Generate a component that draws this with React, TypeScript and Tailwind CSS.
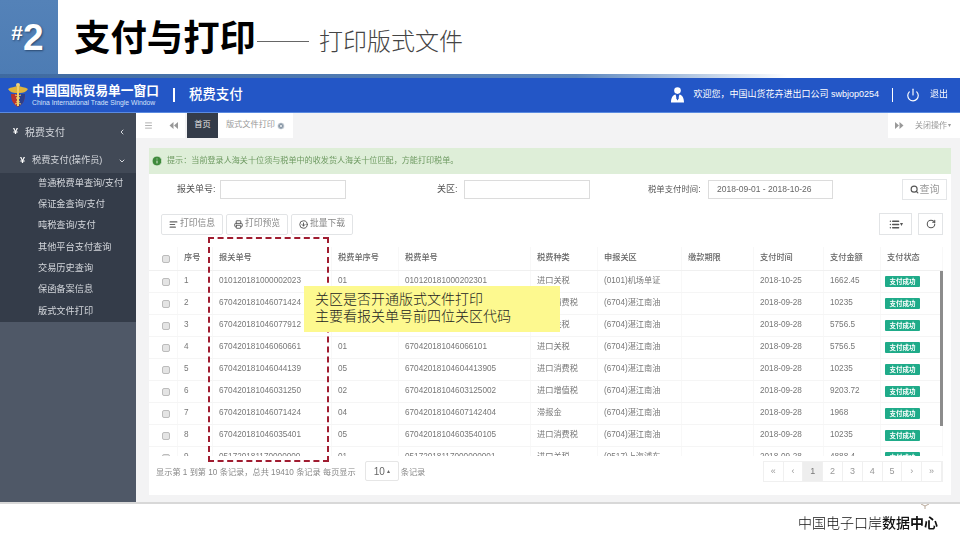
import React from "react";
import { Menu, ChevronLeft, ChevronDown, Info, Search, RotateCw, Printer, CircleArrowDown, AlignLeft, List, Power, CircleX } from "lucide-react";

const cols = "grid grid-cols-[29px_35px_119px_67px_132px_67px_84px_72px_70px_57px_62px]";
const cell = "h-full flex items-center border-r border-[#f8f8f8]";
const rows = [
  ["1", "010120181000002023", "01", "010120181000202301", "进口关税", "(0101)机场单证", "", "2018-10-25", "1662.45"],
  ["2", "670420181046071424", "", "", "进口消费税", "(6704)湛江南油", "", "2018-09-28", "10235"],
  ["3", "670420181046077912", "", "", "进口关税", "(6704)湛江南油", "", "2018-09-28", "5756.5"],
  ["4", "670420181046060661", "01", "670420181046066101", "进口关税", "(6704)湛江南油", "", "2018-09-28", "5756.5"],
  ["5", "670420181046044139", "05", "670420181046044 13905", "进口消费税", "(6704)湛江南油", "", "2018-09-28", "10235"],
  ["6", "670420181046031250", "02", "670420181046031 25002", "进口增值税", "(6704)湛江南油", "", "2018-09-28", "9203.72"],
  ["7", "670420181046071424", "04", "670420181046071 42404", "滞报金", "(6704)湛江南油", "", "2018-09-28", "1968"],
  ["8", "670420181046035401", "05", "670420181046035 40105", "进口消费税", "(6704)湛江南油", "", "2018-09-28", "10235"],
  ["9", "051720181170000000", "01", "051720181170000 00001", "进口关税", "(0517)上海浦东", "", "2018-09-28", "4888.4"],
].map((r) => r.map((c) => c.replace(/(\d{15}) (\d+)/, "$1$2")));

const heads = ["", "序号", "报关单号", "税费单序号", "税费单号", "税费种类", "申报关区", "缴款期限", "支付时间", "支付金额", "支付状态"];
const sub = ["普通税费单查询/支付", "保证金查询/支付", "吨税查询/支付", "其他平台支付查询", "交易历史查询", "保函备案信息", "版式文件打印"];

function Check() {
  return <span className="block w-[8px] h-[8px] rounded-[2px] border border-[#bcbcbc] bg-[#e4e4e4]" />;
}

function Logo() {
  return (
    <svg width="20" height="26" viewBox="0 0 20 26" className="shrink-0">
      <path d="M10 4C7 5 3 5 0 7c2 3 5 4 8 4h4c3 0 6-1 8-4-3-2-7-2-10-3z" fill="#e0b53c" />
      <circle cx="10" cy="3" r="2" fill="#f0d27a" />
      <path d="M3 12h14c0 7-3 11-7 13-4-2-7-6-7-13z" fill="#b8352f" />
      <path d="M10 12h7c0 7-3 11-7 13z" fill="#2b3f8c" />
      <rect x="9" y="3" width="2" height="21" fill="#f1cf6a" />
      <path d="M7 13c4 1 6 3 3 5-3 2-1 3 3 4M13 13c-4 1-6 3-3 5 3 2 1 3-3 4" stroke="#f1cf6a" strokeWidth="1" fill="none" />
    </svg>
  );
}

function UserIcon() {
  return (
    <svg width="13" height="16" viewBox="0 0 13 16" className="shrink-0">
      <circle cx="6.5" cy="3.6" r="3.3" fill="#fff" />
      <path d="M0 15.5c0-5 2-7.5 4.5-8l2 5.5 2-5.500c2.500.5 4.500 3 4.500 8z" fill="#fff" />
      <path d="M5.700 8h1.600l.4 3.500-1.200 2-1.200-2z" fill="#2356c6" />
    </svg>
  );
}

function Skip({ right }: { right?: boolean }) {
  return (
    <svg width="9" height="7" viewBox="0 0 9 7" className={right ? "" : "rotate-180"}>
      <path d="M0 0l4 3.500L0 7zM4.500 0l4 3.500-4 3.500z" fill="#999" />
    </svg>
  );
}

function Btn({ icon, label }: { icon: React.ReactNode; label: string }) {
  return (
    <div className="w-[62px] h-[21px] flex items-center justify-center gap-[2px] border border-[#e2e4e6] rounded-[2px] text-[8.800px] text-[#888]">
      {icon}
      <span>{label}</span>
    </div>
  );
}

export default function App() {
  return (
    <div className="w-[960px] h-[540px] overflow-hidden bg-white flex flex-col font-['Liberation_Sans','Noto_Sans_CJK_SC',sans-serif]">
      {/* slide title */}
      <header className="h-[74px] flex shrink-0">
        <div className="w-[58px] bg-gradient-to-b from-[#5482b8] to-[#4d7cb4] flex items-center justify-center text-white font-bold [text-shadow:1px_1px_2px_#2c4a70]">
          <span className="text-[21px] leading-none -mt-[9px] -ml-[3px]">#</span>
          <span className="text-[37px] leading-none">2</span>
        </div>
        <div className="flex items-center pl-[17px]">
          <h1 className="text-[36.400px] font-bold text-black leading-none -mt-[4px] -ml-[1px] font-['Noto_Sans_CJK_SC',sans-serif]">支付与打印</h1>
          <span className="w-[52px] h-px bg-[#666] ml-px mt-[8px]" />
          <span className="text-[24px] text-[#444] ml-[10px] leading-none mt-[5px] font-['Noto_Sans_CJK_SC',sans-serif] font-light">打印版式文件</span>
        </div>
      </header>
      <div className="h-[4px] shrink-0 bg-gradient-to-r from-[#3f6aa0] via-[#5b86bd] via-60% to-white to-[82%]" />

      <div className="flex-1 flex flex-col min-h-0 blur-[0.4px]">
        {/* app bar */}
        <nav className="h-[35px] shrink-0 bg-[#2356c6] border-b border-[#5a8ae0] flex items-center text-white pl-[8px] pr-[12px]">
          <Logo />
          <div className="ml-[4px] flex flex-col">
            <span className="text-[12.700px] font-bold leading-[14px]">中国国际贸易单一窗口</span>
            <span className="text-[6.800px] leading-[9px] text-[#d5e2fa]">China International Trade Single Window</span>
          </div>
          <span className="w-[2px] h-[14px] bg-white ml-[14px]" />
          <span className="text-[13.500px] font-medium ml-[14px]">税费支付</span>
          <div className="ml-auto flex items-center">
            <UserIcon />
            <span className="text-[9px] ml-[9px]">欢迎您，中国山货花卉进出口公司 swbjop0254</span>
            <span className="w-px h-[14px] bg-white ml-[13px]" />
            <Power size={14} className="ml-[13px]" strokeWidth={2} />
            <span className="text-[9px] ml-[10px]">退出</span>
          </div>
        </nav>

        <div className="flex-1 flex min-h-0">
          {/* sidebar */}
          <aside className="w-[136px] shrink-0 bg-[#4f5867] text-[#d4d7dc] flex flex-col">
            <div className="bg-[#414956] pt-[11px]">
              <div className="h-[16px] flex items-center pl-[13px] pr-[10px] text-[10px]">
                <span className="font-bold text-white text-[9px] w-[12px]">¥</span>
                <span>税费支付</span>
                <ChevronLeft size={8} className="ml-auto" strokeWidth={3} />
              </div>
              <div className="h-[16px] mt-[13px] flex items-center pl-[20px] pr-[10px] text-[9.200px]">
                <span className="font-bold text-white text-[9px] w-[12px]">¥</span>
                <span>税费支付(操作员)</span>
                <ChevronDown size={8} className="ml-auto" strokeWidth={3} />
              </div>
              <ul className="mt-[4px] bg-[#343c49] pl-[38px] text-[9.200px]">
                {sub.map((s) => (
                  <li key={s} className="h-[21.300px] flex items-center">{s}</li>
                ))}
              </ul>
            </div>
          </aside>

          <main className="flex-1 bg-[#f3f3f4] flex flex-col min-w-0 min-h-0">
            {/* tabs */}
            <div className="h-[25px] shrink-0 flex items-stretch text-[#999] text-[8.200px]">
              <div className="w-[25px] bg-white flex items-center justify-center"><Menu size={9} /></div>
              <div className="w-[24px] bg-white flex items-center justify-center"><Skip /></div>
              <div className="w-[31px] ml-[2px] bg-[#343c49] text-[#e6e6e6] flex items-center justify-center">首页</div>
              <div className="w-[75px] bg-white flex items-center justify-center gap-[2px]">
                <span>版式文件打印</span>
                <CircleX size={8} fill="#8a99a8" stroke="#fff" />
              </div>
              <div className="ml-auto w-[72px] bg-white flex items-center text-[8px]">
                <span className="ml-[7px] flex"><Skip right /></span>
                <span className="ml-[11px]">关闭操作</span>
                <span className="ml-px text-[6px]">▾</span>
              </div>
            </div>

            {/* card */}
            <div className="relative ml-[13px] mr-[9px] mt-[10px] h-[347px] bg-white flex flex-col shrink-0">
              <div className="h-[26px] shrink-0 bg-[#deeed8] flex items-center pl-[2px] text-[8.100px] text-[#6e9a62] gap-[4px]">
                <Info size={12} fill="#3f8a3c" stroke="#deeed8" />
                <span>提示：当前登录人海关十位须与税单中的收发货人海关十位匹配，方能打印税单。</span>
              </div>

              {/* search form */}
              <div className="h-[27px] mt-[2px] flex items-center text-[9px] text-[#555] shrink-0 pr-[4px]">
                <span className="ml-[28px] w-[43px]">报关单号:</span>
                <span className="w-[126px] h-[19px] border border-[#dcdcdc]" />
                <span className="ml-[91px] w-[27px]">关区:</span>
                <span className="w-[126px] h-[19px] border border-[#dcdcdc]" />
                <span className="ml-[58px] w-[60px] text-[8.400px]">税单支付时间:</span>
                <span className="w-[125px] h-[19px] border border-[#dcdcdc] flex items-center pl-[8px] text-[8.500px] text-[#666]">2018-09-01 - 2018-10-26</span>
                <span className="ml-auto w-[45px] h-[21px] border border-[#e4e6e8] flex items-center justify-center gap-[1px] text-[#999] text-[10px]">
                  <Search size={9} className="text-[#555]" strokeWidth={3} />查询
                </span>
              </div>

              {/* toolbar */}
              <div className="h-[22px] mt-[10px] flex items-center gap-[3px] pl-[12px] pr-[8px] shrink-0">
                <Btn icon={<AlignLeft size={9} strokeWidth={3} className="text-[#666]" />} label="打印信息" />
                <Btn icon={<Printer size={9} strokeWidth={2.500} className="text-[#555]" />} label="打印预览" />
                <Btn icon={<CircleArrowDown size={9} strokeWidth={2.500} className="text-[#555]" />} label="批量下载" />
                <span className="ml-auto w-[33px] h-[22px] border border-[#e2e4e6] flex items-center justify-center text-[#555]">
                  <List size={11} strokeWidth={3} /><span className="text-[6px]">▾</span>
                </span>
                <span className="ml-[3px] w-[25px] h-[22px] border border-[#e2e4e6] flex items-center justify-center text-[#555]">
                  <RotateCw size={10} strokeWidth={2.500} />
                </span>
              </div>

              {/* table */}
              <div className="relative mt-[12px] mr-[8px] h-[209px] overflow-hidden shrink-0 text-[8.200px] text-[#777]">
                <div className={`${cols} h-[24px] items-center border-b border-[#f0f0f0] text-[#666]`}>
                  {heads.map((h, i) => (
                    <div key={i} className={`${cell} pl-[6px] font-medium`}>
                      {i === 0 ? <span className="block ml-[7px]"><Check /></span> : h}
                    </div>
                  ))}
                </div>
                {rows.map((r) => (
                  <div key={r[0]} className={`${cols} h-[22px] items-center border-b border-[#f5f5f5]`}>
                    <div className={`${cell} pl-[13px]`}><Check /></div>
                    {r.map((c, i) => (
                      <div key={i} className={`${cell} pl-[6px]`}>{c}</div>
                    ))}
                    <div className={`${cell} pl-[4px]`}>
                      <span className="block w-[35px] h-[11px] bg-[#1fab89] rounded-[1px] text-white text-[6.500px] leading-[11px] text-center font-bold">支付成功</span>
                    </div>
                  </div>
                ))}
                {/* scrollbar */}
                <div className="absolute right-0 top-[24px] w-[3px] h-[155px] bg-[#8c8c8c]" />
              </div>

              {/* pager */}
              <div className="flex-1 flex items-start pl-[7px] pr-[8px] pt-[11px] text-[8.200px] text-[#888]">
                <span>显示第 1 到第 10 条记录，总共 19410 条记录 每页显示</span>
                <span className="ml-[9px] w-[34px] h-[20px] border border-[#e6e6e6] rounded-[2px] flex items-center justify-center gap-[2px] text-[10px] text-[#666] -mt-[6px]">
                  10<span className="text-[6px]">▴</span>
                </span>
                <span className="ml-[2px]">条记录</span>
                <div className="ml-auto flex -mt-[6px] text-[9px] text-[#999] border border-[#f0f0f0]">
                  {["«", "‹", "1", "2", "3", "4", "5", "›", "»"].map((p) => (
                    <span key={p} className={`w-[19.800px] h-[19px] flex items-center justify-center border-r border-[#f0f0f0] ${p === "1" ? "bg-[#eeeeee] text-[#777]" : ""}`}>{p}</span>
                  ))}
                </div>
              </div>

              {/* annotation: dashed box */}
              <div className="absolute left-[59px] top-[89px] w-[121px] h-[225px] border-2 border-dashed border-[#a01c30]" />
              {/* annotation: yellow note */}
              <div className="absolute left-[155px] top-[138px] w-[256px] h-[46px] bg-[#fdf98f] flex flex-col justify-center pb-[5px] pl-[11px] text-[14px] leading-[17px] text-[#222] font-['Noto_Sans_CJK_SC',sans-serif] font-light">
                <span>关区是否开通版式文件打印</span>
                <span>主要看报关单号前四位关区代码</span>
              </div>
            </div>
          </main>
        </div>
      </div>

      {/* footer */}
      <footer className="relative h-[38px] shrink-0 border-t-2 border-[#d8d8d8] flex items-center justify-end pr-[22px] text-[14px] text-[#111] font-['Noto_Sans_CJK_SC',sans-serif]">
        <span className="font-light">中国电子口岸</span>
        <span className="font-medium">数据</span>
        <span className="font-bold">中心</span>
        <svg width="8" height="5" viewBox="0 0 8 5" className="absolute right-[31px] top-0">
          <path d="M0 0l4 2 4-2M4 2v3" stroke="#b9a99a" strokeWidth="1" fill="none" />
        </svg>
      </footer>
    </div>
  );
}
